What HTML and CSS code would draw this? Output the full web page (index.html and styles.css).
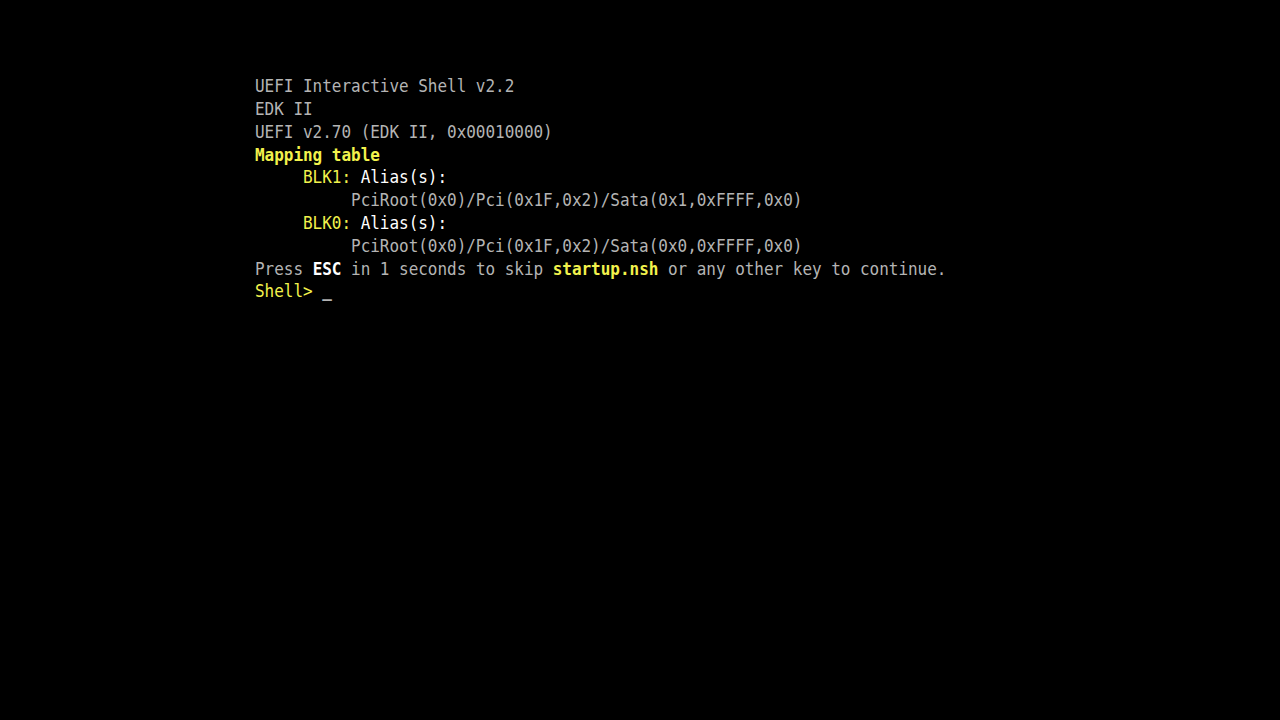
FILE: index.html
```html
<!DOCTYPE html>
<html lang="en">
<head>
    <meta charset="UTF-8">
    <title>UEFI Interactive Shell</title>
    <link rel="stylesheet" href="styles.css">
</head>
<body>

<div class="ecran">
<pre class="console"><span class="gris">UEFI Interactive Shell v2.2</span>
<span class="gris">EDK II</span>
<span class="gris">UEFI v2.70 (EDK II, 0x00010000)</span>
<span class="jaune gras">Mapping table</span>
     <span class="jaune">BLK1:</span> <span class="blanc">Alias(s):</span>
          <span class="gris">PciRoot(0x0)/Pci(0x1F,0x2)/Sata(0x1,0xFFFF,0x0)</span>
     <span class="jaune">BLK0:</span> <span class="blanc">Alias(s):</span>
          <span class="gris">PciRoot(0x0)/Pci(0x1F,0x2)/Sata(0x0,0xFFFF,0x0)</span>
<span class="gris">Press <span class="blanc gras">ESC</span> in 1 seconds to skip <span class="jaune gras">startup.nsh</span> or any other key to continue.</span>
<span class="jaune">Shell&gt;</span> <span class="curseur">_</span></pre>
</div>

</body>
</html>
```

FILE: styles.css
```css
:root {
    --fond: #000000;
    --gris: #b4b4b4;
    --jaune: #f2f24c;
    --blanc: #ffffff;
}

body {
    margin: 0;
    background-color: var(--fond);
    height: 100vh;
    overflow: hidden;
}

.ecran {
    padding-top: 75px;
    padding-left: 255px;
}

.console {
    margin: 0;
    font-family: "DejaVu Sans Mono", "Liberation Mono", monospace;
    font-size: 16px;
    line-height: 20px;
    letter-spacing: -0.03px;
    color: var(--gris);
    transform: scaleY(1.14);
    transform-origin: top left;
}

.gris {
    color: var(--gris);
}

.jaune {
    color: var(--jaune);
}

.blanc {
    color: var(--blanc);
}

.gras {
    font-weight: bold;
}

.curseur {
    color: var(--gris);
    font-weight: bold;
}
```
